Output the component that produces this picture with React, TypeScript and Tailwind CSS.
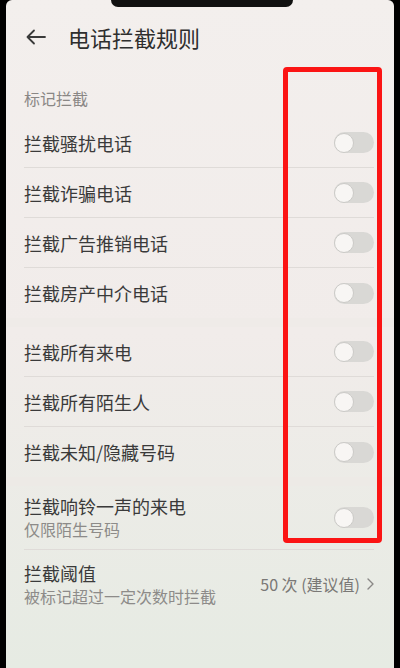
import React from "react";

const font = { fontFamily: '"Noto Sans CJK SC", "Noto Sans", sans-serif' };

function Toggle() {
  return (
    <div className="flex h-[21px] w-[40px] shrink-0 items-center rounded-full bg-[#d9d8d5]">
      <div className="h-[20px] w-[20px] rounded-full border border-[#cbcac7] bg-[#f8f6f4]" />
    </div>
  );
}

function Row({ title, sub, last }: { title: string; sub?: string; last?: boolean }) {
  return (
    <div
      className={
        "flex items-center justify-between " +
        (sub ? "h-[64px] " : "h-[50px] ") +
        (last ? "" : "border-b border-[#dfdbd8]")
      }
    >
      <div className="flex flex-col">
        <span className="text-[18px] leading-[24px] text-[#3a3a3a]">{title}</span>
        {sub && <span className="text-[16px] leading-[23px] text-[#8d8b89]">{sub}</span>}
      </div>
      <Toggle />
    </div>
  );
}

export default function App() {
  return (
    <div className="relative flex h-[668px] w-[400px] bg-black" style={font}>
      <div className="ml-[6px] mr-[6px] flex flex-1 flex-col rounded-t-[6px] bg-gradient-to-b from-[#f3efed] via-[#f1ecea] to-[#e6ebe3]">
        {/* header */}
        <div className="flex h-[72px] items-center pl-[20px] pt-[2px]">
          <svg width="20" height="16" viewBox="0 0 20 16" fill="none" stroke="#3a3a3a" strokeWidth="1.8" strokeLinecap="round" strokeLinejoin="round">
            <path d="M19 8H1.5M8 1.5L1.5 8L8 14.5" />
          </svg>
          <span className="ml-[22px] text-[22px] leading-[28px] text-[#2e2e2e]">电话拦截规则</span>
        </div>

        <div className="pl-[18px] pr-[20px]">
          <div className="flex h-[46px] items-center pt-[5px] text-[16px] text-[#8a8785]">标记拦截</div>
          <div>
            <Row title="拦截骚扰电话" />
            <Row title="拦截诈骗电话" />
            <Row title="拦截广告推销电话" />
            <Row title="拦截房产中介电话" last />
          </div>
        </div>
        <div className="h-[9px] bg-[#efebe8]" />
        <div className="pl-[18px] pr-[20px]">
          <Row title="拦截所有来电" />
          <Row title="拦截所有陌生人" />
          <Row title="拦截未知/隐藏号码" last />
        </div>
        <div className="h-[9px] bg-[#edeae6]" />
        <div className="pl-[18px] pr-[20px]">
          <Row title="拦截响铃一声的来电" sub="仅限陌生号码" />
          <div className="flex h-[68px] items-center justify-between">
            <div className="flex flex-col">
              <span className="text-[18px] leading-[24px] text-[#3a3a3a]">拦截阈值</span>
              <span className="text-[16px] leading-[23px] text-[#8d8b89]">被标记超过一定次数时拦截</span>
            </div>
            <div className="flex items-center gap-[7px] text-[16px] text-[#7a7876]">
              <span>50 次 (建议值)</span>
              <svg width="7" height="12" viewBox="0 0 7 12" fill="none" stroke="#8a8886" strokeWidth="1.4" strokeLinecap="round" strokeLinejoin="round">
                <path d="M1 1l5 5-5 5" />
              </svg>
            </div>
          </div>
        </div>
      </div>

      {/* notch */}
      <div className="absolute left-[111px] top-0 h-[7px] w-[182px] rounded-b-[8px] bg-[#111]" />

      {/* red highlight box */}
      <div className="absolute left-[283px] top-[67px] h-[476px] w-[99px] rounded-[4px] border-[5px] border-[#fb1414]" />
    </div>
  );
}
